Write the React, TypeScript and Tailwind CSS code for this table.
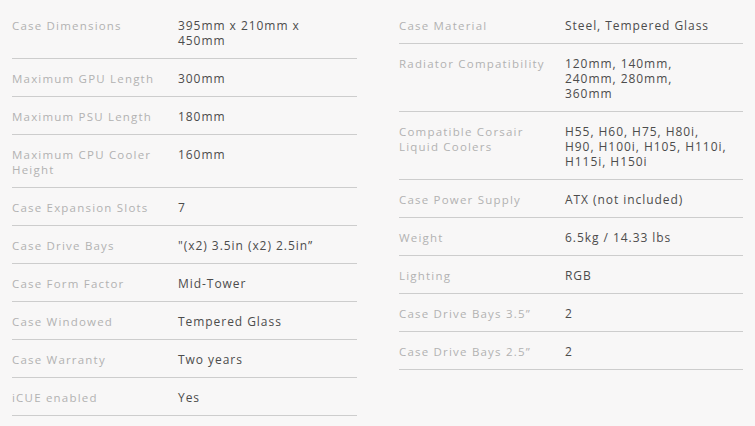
import type { ReactNode } from 'react';

type Spec = { label: ReactNode; value: ReactNode };

const LEFT: Spec[] = [
  { label: 'Case Dimensions', value: <>395mm x 210mm x<br />450mm</> },
  { label: 'Maximum GPU Length', value: '300mm' },
  { label: 'Maximum PSU Length', value: '180mm' },
  { label: <>Maximum CPU Cooler<br />Height</>, value: '160mm' },
  { label: 'Case Expansion Slots', value: '7' },
  { label: 'Case Drive Bays', value: '"(x2) 3.5in (x2) 2.5in\u201d' },
  { label: 'Case Form Factor', value: 'Mid-Tower' },
  { label: 'Case Windowed', value: 'Tempered Glass' },
  { label: 'Case Warranty', value: 'Two years' },
  { label: 'iCUE enabled', value: 'Yes' },
];

const RIGHT: Spec[] = [
  { label: 'Case Material', value: 'Steel, Tempered Glass' },
  { label: 'Radiator Compatibility', value: <>120mm, 140mm,<br />240mm, 280mm,<br />360mm</> },
  {
    label: <>Compatible Corsair<br />Liquid Coolers</>,
    value: <>H55, H60, H75, H80i,<br />H90, H100i, H105, H110i,<br />H115i, H150i</>,
  },
  { label: 'Case Power Supply', value: 'ATX (not included)' },
  { label: 'Weight', value: '6.5kg / 14.33 lbs' },
  { label: 'Lighting', value: 'RGB' },
  { label: 'Case Drive Bays 3.5\u201d', value: '2' },
  { label: 'Case Drive Bays 2.5\u201d', value: '2' },
];

function SpecRow({ label, value }: Spec) {
  return (
    <div className="flex pt-[12px] pb-[10px] border-b border-[#cdcdcd] leading-[15px]">
      <div className="w-[166px] shrink-0 text-[11.5px] tracking-[1.2px] text-[#b2b2b2]">{label}</div>
      <div className="text-[12px] tracking-[0.95px] font-medium text-[#4c4c4c]">{value}</div>
    </div>
  );
}

function SpecColumn({ rows, width }: { rows: Spec[]; width: string }) {
  return (
    <div className={width}>
      {rows.map((r, i) => (
        <SpecRow key={i} {...r} />
      ))}
    </div>
  );
}

export default function App() {
  return (
    <div
      className="w-[755px] h-[426px] bg-[#f8f7f7] pl-[12px] pt-[6px] flex gap-[42px] overflow-hidden"
      style={{ fontFamily: '"Open Sans", "DejaVu Sans", sans-serif' }}
    >
      <SpecColumn rows={LEFT} width="w-[345px]" />
      <SpecColumn rows={RIGHT} width="w-[344px]" />
    </div>
  );
}
